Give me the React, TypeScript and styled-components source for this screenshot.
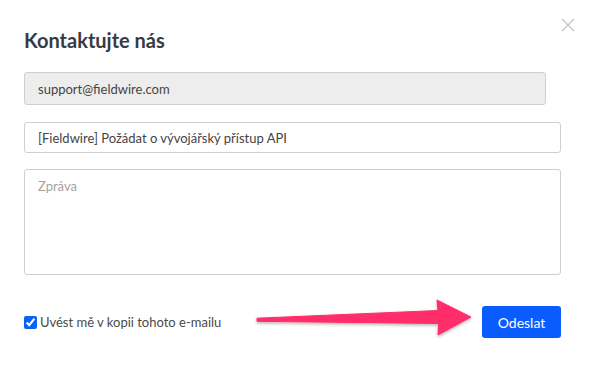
import React from "react";
import styled, { createGlobalStyle } from "styled-components";

const GlobalStyle = createGlobalStyle`
  html, body {
    margin: 0;
    padding: 0;
    background: #ffffff;
  }
  body {
    font-family: "Lato", "Noto Sans", sans-serif;
    -webkit-font-smoothing: antialiased;
  }
`;

const Modal = styled.div`
  position: relative;
  width: 592px;
  height: 367px;
  box-sizing: border-box;
  padding: 28px 31px 0 24px;
  display: flex;
  flex-direction: column;
`;

const CloseButton = styled.button`
  position: absolute;
  top: 18px;
  right: 17px;
  width: 14px;
  height: 14px;
  padding: 0;
  border: none;
  background: none;
  cursor: pointer;
  display: flex;
`;

const Title = styled.h2`
  margin: 0;
  font-size: 20px;
  line-height: 24px;
  font-weight: 700;
  color: #373a42;
`;

const Field = styled.input<{ $grey?: boolean; $inset?: number; $top: number }>`
  box-sizing: border-box;
  width: calc(100% - ${(p) => p.$inset ?? 0}px);
  height: ${(p) => (p.$grey ? 33 : 31)}px;
  margin-top: ${(p) => p.$top}px;
  padding: 0 13px;
  border: 1px solid #cfcfcf;
  border-radius: 3px;
  background: ${(p) => (p.$grey ? "#ededed" : "#ffffff")};
  font-family: "Lato", sans-serif;
  font-size: 13px;
  color: #444;
  outline: none;
`;

const MessageArea = styled.textarea`
  box-sizing: border-box;
  width: 100%;
  height: 106px;
  margin-top: 16px;
  padding: 8px 13px;
  border: 1px solid #cfcfcf;
  border-radius: 3px;
  font-family: "Lato", sans-serif;
  font-size: 13px;
  color: #444;
  resize: none;
  outline: none;
  &::placeholder {
    color: #a3a3a3;
  }
`;

const Footer = styled.div`
  margin-top: 31px;
  display: flex;
  align-items: center;
  justify-content: space-between;
`;

const CheckLabel = styled.label`
  display: flex;
  align-items: center;
  gap: 3px;
  font-size: 13px;
  color: #4a4a4a;
  cursor: pointer;
`;

const CheckBox = styled.input`
  margin: 0;
  width: 13px;
  height: 13px;
  accent-color: #0b63f6;
`;

const SendButton = styled.button`
  width: 79px;
  height: 32px;
  border: none;
  border-radius: 3px;
  background: #0a5cff;
  color: #ffffff;
  font-family: "Lato", sans-serif;
  font-size: 14px;
  cursor: pointer;
`;

const Arrow = styled.svg`
  position: absolute;
  left: 250px;
  top: 292px;
  overflow: visible;
  pointer-events: none;
`;

export default function App() {
  return (
    <>
      <GlobalStyle />
      <Modal>
        <CloseButton aria-label="Zavřít">
          <svg width="14" height="14" viewBox="0 0 14 14">
            <path d="M1 1 L13 13 M13 1 L1 13" stroke="#c4c4c4" strokeWidth="1.2" />
          </svg>
        </CloseButton>
        <Title>Kontaktujte nás</Title>
        <Field $grey $inset={15} $top={20} readOnly value="support@fieldwire.com" />
        <Field $top={17} readOnly value="[Fieldwire] Požádat o vývojářský přístup API" />
        <MessageArea placeholder="Zpráva" />
        <Footer>
          <CheckLabel>
            <CheckBox type="checkbox" defaultChecked />
            Uvést mě v kopii tohoto e-mailu
          </CheckLabel>
          <SendButton>Odeslat</SendButton>
        </Footer>
        <Arrow width="230" height="50" viewBox="0 0 230 50">
          <defs>
            <filter id="arrowShadow" x="-10%" y="-40%" width="120%" height="180%">
              <feDropShadow dx="0" dy="1.5" stdDeviation="1.5" floodColor="#000" floodOpacity="0.3" />
            </filter>
          </defs>
          <path
            d="M7 26.2 L188 18.5 L187 8 L221 25 L188 43 L188.5 31.5 L7 29.3 Z"
            fill="#ff2d6b"
            strokeLinejoin="round"
            stroke="#ff2d6b"
            strokeWidth="1"
            filter="url(#arrowShadow)"
          />
        </Arrow>
      </Modal>
    </>
  );
}
